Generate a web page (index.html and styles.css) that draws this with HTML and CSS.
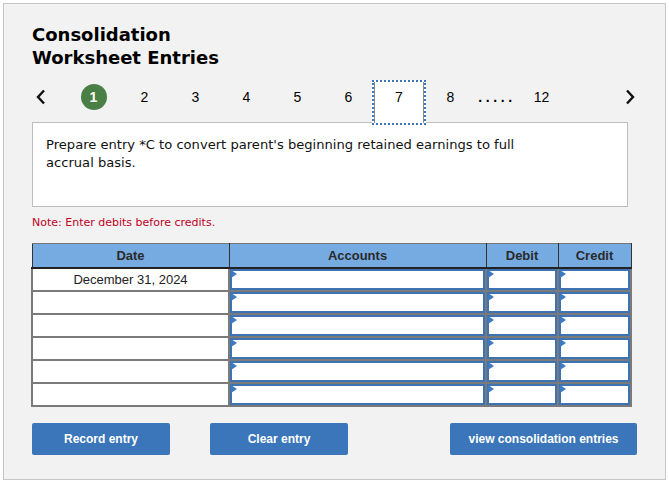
FILE: index.html
```html
<!DOCTYPE html>
<html>
<head>
<meta charset="utf-8">
<link rel="stylesheet" href="styles.css">
</head>
<body>
<div class="panel">
  <h1 class="title">Consolidation<br>Worksheet Entries</h1>
  <div class="pager">
    <span class="arrow">
      <svg width="12" height="16" viewBox="0 0 12 16"><path d="M9 1.5 L3 8 L9 14.5" fill="none" stroke="#111" stroke-width="2.4"/></svg>
    </span>
    <span class="page first"><span class="current">1</span></span>
    <span class="page">2</span>
    <span class="page">3</span>
    <span class="page">4</span>
    <span class="page">5</span>
    <span class="page">6</span>
    <span class="page active">7</span>
    <span class="page">8</span>
    <span class="dots">.....</span>
    <span class="page">12</span>
    <span class="arrow right">
      <svg width="12" height="16" viewBox="0 0 12 16"><path d="M3 1.5 L9 8 L3 14.5" fill="none" stroke="#111" stroke-width="2.4"/></svg>
    </span>
  </div>
  <div class="prompt">
    <p>Prepare entry *C to convert parent's beginning retained earnings to full accrual basis.</p>
  </div>
  <div class="note">Note: Enter debits before credits.</div>
  <table class="grid">
    <colgroup>
      <col class="c-date"><col class="c-acc"><col class="c-deb"><col class="c-cre">
    </colgroup>
    <thead>
      <tr><th>Date</th><th>Accounts</th><th>Debit</th><th>Credit</th></tr>
    </thead>
    <tbody>
      <tr><td class="date">December 31, 2024</td><td><div class="inp"></div></td><td><div class="inp"></div></td><td><div class="inp"></div></td></tr>
      <tr><td class="date"></td><td><div class="inp"></div></td><td><div class="inp"></div></td><td><div class="inp"></div></td></tr>
      <tr><td class="date"></td><td><div class="inp"></div></td><td><div class="inp"></div></td><td><div class="inp"></div></td></tr>
      <tr><td class="date"></td><td><div class="inp"></div></td><td><div class="inp"></div></td><td><div class="inp"></div></td></tr>
      <tr><td class="date"></td><td><div class="inp"></div></td><td><div class="inp"></div></td><td><div class="inp"></div></td></tr>
      <tr><td class="date"></td><td><div class="inp"></div></td><td><div class="inp"></div></td><td><div class="inp"></div></td></tr>
    </tbody>
  </table>
  <div class="actions">
    <button class="btn b1">Record entry</button>
    <button class="btn b2">Clear entry</button>
    <button class="btn b3">view consolidation entries</button>
  </div>
</div>
</body>
</html>
```

FILE: styles.css
```css
html, body {
  margin: 0;
  padding: 0;
  background: #ffffff;
}
body {
  padding: 3px;
}
.panel {
  width: 663px;
  height: 477px;
  box-sizing: border-box;
  border: 1px solid #c6c6c6;
  background: #f2f2f2;
  padding: 19px 28px 0 28px;
  font-family: "Liberation Sans", Arial, sans-serif;
}
.title {
  margin: 0;
  font-family: "DejaVu Sans", Verdana, sans-serif;
  font-weight: bold;
  font-size: 18px;
  line-height: 23px;
  color: #000;
}
.pager {
  display: flex;
  align-items: flex-start;
  height: 45px;
  margin-top: 11px;
  font-size: 14px;
  color: #000;
}
.arrow {
  width: 14px;
  height: 34px;
  display: flex;
  align-items: center;
  justify-content: center;
  margin-left: 2px;
}
.arrow.right {
  margin-left: 56px;
}
.page {
  width: 51px;
  text-align: center;
  height: 34px;
  line-height: 34px;
  box-sizing: border-box;
}
.page.first {
  margin-left: 20px;
  display: flex;
  align-items: center;
  justify-content: center;
}
.current {
  display: block;
  width: 26px;
  height: 26px;
  line-height: 26px;
  border-radius: 50%;
  background: #4a8046;
  color: #fff;
  font-weight: bold;
}
.page.active {
  width: 54px;
  margin: 0 -1px 0 -2px;
  height: 45px;
  line-height: 30px;
  background: #fff;
  border: 2px dotted #3b76bb;
  box-shadow: inset 1px 0 0 #8a8a8a, inset -1px 0 0 #8a8a8a;
  position: relative;
  z-index: 2;
}
.dots {
  height: 34px;
  line-height: 34px;
  font-size: 14px;
  font-weight: bold;
  letter-spacing: 3.6px;
  width: 40px;
  text-align: center;
  text-indent: 2px;
}
.prompt {
  width: 596px;
  background: #fff;
  border: 1px solid #bdbdbd;
  height: 85px;
  box-sizing: border-box;
  margin-top: -3px;
  padding: 13px 13px;
  position: relative;
  z-index: 1;
}
.prompt p {
  margin: 0;
  max-width: 490px;
  font-family: "DejaVu Sans", Verdana, sans-serif;
  font-size: 13.1px;
  line-height: 18px;
  color: #111;
}
.note {
  margin-top: 9px;
  font-family: "DejaVu Sans", Verdana, sans-serif;
  font-size: 11px;
  line-height: 14px;
  color: #c1001f;
  height: 14px;
}
.grid {
  margin-top: 13px;
  margin-left: -1px;
  border-collapse: collapse;
  width: 599px;
  table-layout: fixed;
}
.c-date { width: 197px; }
.c-acc { width: 257px; }
.c-deb { width: 72px; }
.c-cre { width: 73px; }
.grid th {
  background: #76abe2;
  height: 23px;
  padding: 0;
  font-size: 13px;
  font-weight: bold;
  color: #2a2a2a;
  border: 1px solid #333;
  border-top: 1px solid #777;
  border-bottom: 2px solid #222;
}
.grid td {
  padding: 0;
  border: 2px solid #7a7a7a;
  background: #fff;
}
.grid td.date {
  height: 21px;
  line-height: 21px;
  text-align: center;
  font-size: 13px;
  color: #222;
  border-right: 1px solid #444;
}
.inp {
  height: 17px;
  border: 2px solid #3d73b2;
  position: relative;
}
.inp::before {
  content: "";
  position: absolute;
  left: -1px;
  top: -1px;
  border-left: 6px solid #3d7ac4;
  border-top: 4px solid transparent;
  border-bottom: 4px solid transparent;
}
.actions {
  display: flex;
  margin-top: 16px;
}
.btn {
  height: 32px;
  border: none;
  border-radius: 2px;
  background: #3a76b9;
  color: #fff;
  font-family: "Liberation Sans", Arial, sans-serif;
  font-weight: bold;
  font-size: 12px;
  padding: 0;
}
.b1 { width: 138px; }
.b2 { width: 138px; margin-left: 40px; }
.b3 { width: 187px; margin-left: auto; margin-right: 0; }
```
